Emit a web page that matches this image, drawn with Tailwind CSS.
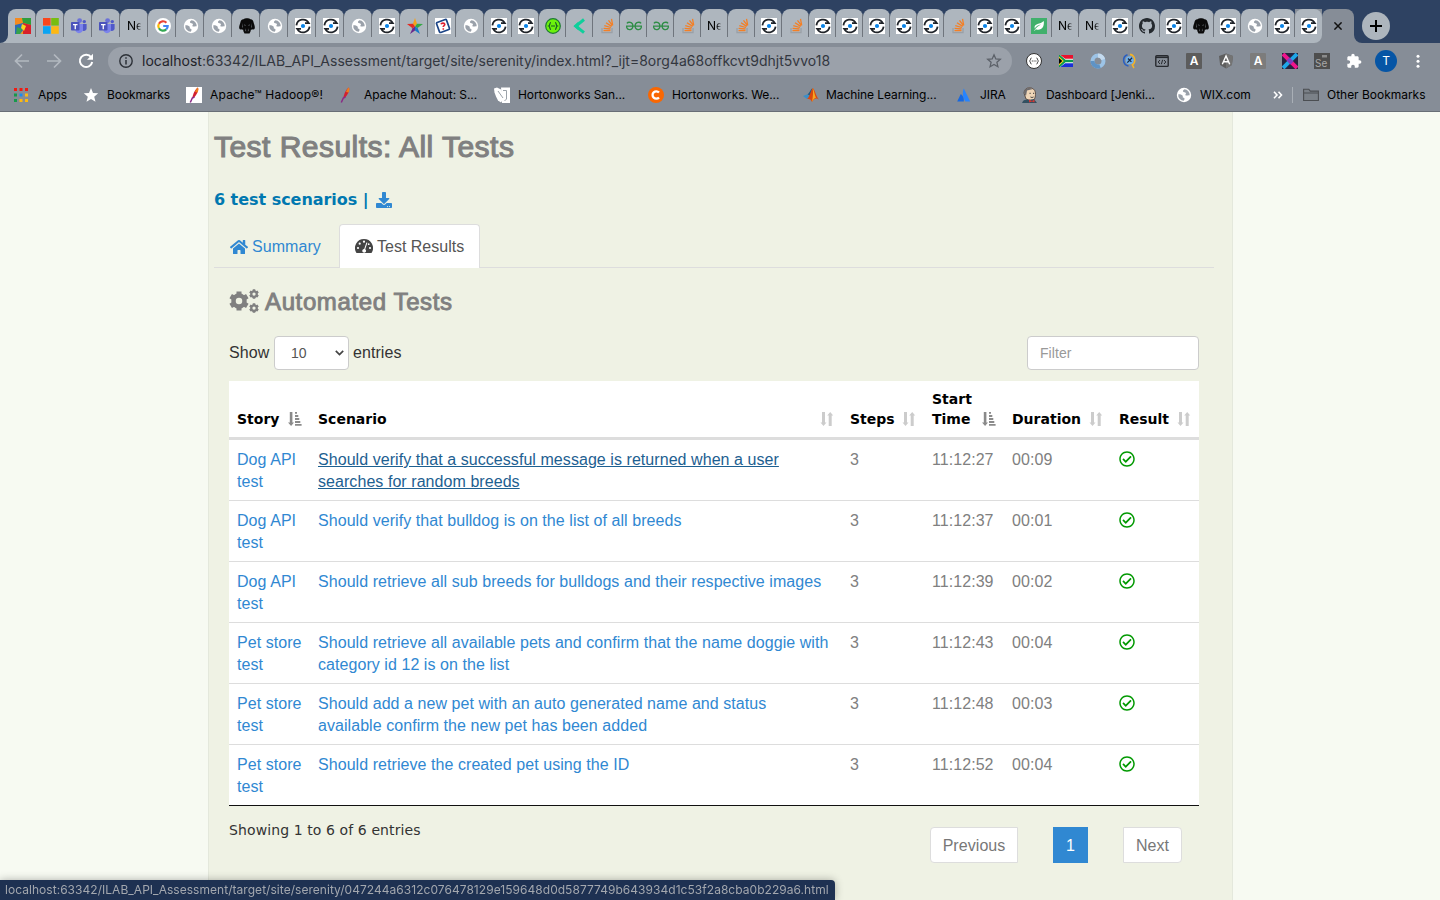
<!DOCTYPE html>
<html lang="en">
<head>
<meta charset="utf-8">
<title>Test Results: All Tests</title>
<script src="https://cdn.jsdelivr.net/npm/@tailwindcss/browser@4"></script>
</head>
<body class="h-[900px] w-[1440px] overflow-hidden bg-[#f7faf2] font-['Liberation_Sans',sans-serif] text-base leading-[22px] text-[#333]">

<!-- icon sprite -->
<svg class="hidden">
  <symbol id="avg" viewBox="0 0 16 16"><rect width="16" height="16" fill="#e8a020"/><path d="M0 0h7l1 5-8 2z" fill="#f58a1f"/><path d="M7 0h9v7l-8-2z" fill="#2f9e3d"/><path d="M8 5l8 2v9H8z" fill="#d8202a"/><path d="M0 7l8-2 1 6-4 5H0z" fill="#2b6cb8"/><path d="M2 9l5 2-2 5H1z" fill="#37a24a"/><path d="M7 6l4 2-2 5-3-3z" fill="#f7d51d"/></symbol>
  <symbol id="ms" viewBox="0 0 16 16"><path d="M0 0h7.600v7.600H0z" fill="#f9461c"/><path d="M8.200 0h7.600v7.600H8.200z" fill="#77bd10"/><path d="M0 8.200h7.600v7.600H0z" fill="#0ba4f3"/><path d="M8.200 8.200h7.600v7.600H8.200z" fill="#fdb813"/></symbol>
  <symbol id="teams" viewBox="0 0 16 16"><circle cx="8.600" cy="2.600" r="2.400" fill="#6a70d8"/><circle cx="13.300" cy="3.600" r="1.700" fill="#5059c9"/><path d="M11 6h4.600v4.500a2.600 2.600 0 0 1-4.600 1.500z" fill="#5059c9"/><path d="M4.500 6h7.500v5.500a4 4 0 0 1-7.500 1.500z" fill="#7b83eb"/><rect y="4" width="8.500" height="8.500" rx=".8" fill="#4b53bc"/><path d="M2 6h4.500v1.300H4.900v4H3.600v-4H2z" fill="#fff"/></symbol>
  <symbol id="google" viewBox="0 0 16 16"><circle cx="8" cy="8" r="8" fill="#fff"/><g fill="none" stroke-width="2.200"><path d="M11.400 4.700A4.700 4.700 0 0 0 3.900 5.700" stroke="#ea4335"/><path d="M3.900 5.700a4.700 4.700 0 0 0 0 4.600" stroke="#fbbc05"/><path d="M3.900 10.300a4.700 4.700 0 0 0 7.300 1.100" stroke="#34a853"/><path d="M11.200 11.400A4.600 4.600 0 0 0 12.700 8H8.200" stroke="#4285f4"/></g></symbol>
  <symbol id="globe" viewBox="0 0 16 16"><circle cx="8" cy="8" r="7.200" fill="#fff"/><path d="M8.500 2.200c-1 .9-1.800 1.300-1.500 2.300.5 1 2.400.3 2.900 1.500.3 1.200-1 1.500-.4 2.200 1 .9 2.700-.4 4.200.1a5.800 5.800 0 0 0-5.200-6.100zM2.300 7.200c1.700-.1 3.200.3 4.200 1.300.8.9-.2 1.500.5 2.100.8.500 1.800.5 1.500 1.700-.2.700-.6.900-.7 1.500A5.800 5.800 0 0 1 2.300 7.200z" fill="#9aa1aa"/></symbol>
  <symbol id="dog" viewBox="0 0 16 16"><path d="M4.500 1.300C6 0 10 0 11.500 1.300c2 0 2.800 1.500 3.300 4 .6 1.800 1.200 3 1 5-.5 1.200-1.300 1.400-2.100 1-.6.700-1.200.6-1.700-.1l-.5 2.300-1 2H5.500l-1-2L4 11.200c-.5.700-1.100.8-1.700.1-.8.400-1.600.2-2.100-1-.2-2 .4-3.200 1-5 .5-2.500 1.300-4 3.300-4z" fill="#0a0a0a"/><path d="M5 6.500l1.500.5-.4.900zM11 6.500L9.500 7l.4.900zM6.400 12.500l.6-2.200.1 3.400zM9.600 12.500L9 10.300l-.1 3.400zM3.600 5l.2 5-.6-1zM12.400 5l-.2 5 .6-1z" fill="#8f969d"/></symbol>
  <symbol id="ring" viewBox="0 0 16 16"><rect width="16" height="16" fill="#fff"/><g fill="none" stroke="#20242a" stroke-width="1.800"><path d="M1.400 7.300A6.600 6.600 0 0 1 13.800 5.200H10"/><path d="M14.600 8.700A6.600 6.600 0 0 1 2.200 10.800H6"/></g><path d="M13.300 4.300l2.200 1.800h-3zM2.700 11.700L.5 9.900h3z" fill="#20242a"/><circle cx="8" cy="8" r="2.100" fill="#0a84e8"/></symbol>
  <symbol id="star" viewBox="0 0 16 16"><path d="M8 0l2 5.800L8 8.500 5.800 6z" fill="#f5a11c"/><path d="M16 6l-5.500 4L8 8.500l2-2.700z" fill="#35a845"/><path d="M13 16l-5-3.500v-4l2.600 1.400z" fill="#1779c8"/><path d="M3 16l2.600-5.800L8 8.500v4z" fill="#6b2a8c"/><path d="M0 6l5.900-.2L8 8.500l-2.400 1.700z" fill="#e12b23"/></symbol>
  <symbol id="stamp" viewBox="0 0 16 16"><rect width="16" height="16" fill="#fff"/><rect x="2.700" y="2.700" width="10.600" height="10.600" rx="1" fill="#fff" stroke="#1c4587" stroke-width="1.700" transform="rotate(-20 8 8)"/><path d="M6 6.200c.5-1.500 3.600-1.500 3.800.2.100 1.200-1.600 1.300-1.600 2.600M8.300 10.200v1.600" stroke="#e02030" stroke-width="1.600" fill="none"/></symbol>
  <symbol id="swagger" viewBox="0 0 16 16"><circle cx="8" cy="8" r="7.300" fill="#6bf20c" stroke="#1d7a33" stroke-width="1.200"/><path d="M6 4.500c-1.800 0-.6 2.900-2.200 3.500 1.600.6.400 3.500 2.200 3.500M10 4.500c1.800 0 .6 2.900 2.200 3.500-1.600.6-.4 3.500-2.200 3.500M6 8h4" fill="none" stroke="#17552a" stroke-width="1.200"/></symbol>
  <symbol id="kat" viewBox="0 0 16 16"><path d="M12 1.500L4 8.200l8 6.500" fill="none" stroke="#0fcf9b" stroke-width="3"/><path d="M1.500 8l5-4.500v9z" fill="#0fcf9b"/></symbol>
  <symbol id="so" viewBox="0 0 16 16"><path d="M3 10v4.600h10V10" fill="none" stroke="#9aa0a6" stroke-width="1.300"/><path d="M4.500 12.700h7M4.600 10.300l6.900.7M5.300 7.600l6.600 1.900M7 4.800l5.700 3.600M9.500 2.300l4 5.400M12.500.8l1.200 6.500" stroke="#f47f24" stroke-width="1.300"/></symbol>
  <symbol id="gfg" viewBox="0 0 16 16"><g fill="none" stroke="#2f8d46" stroke-width="1.300"><path d="M.9 5.300C2.200 3.600 6.900 3.800 6.900 8S2 12.700.8 9.800L.6 8.100H15.400L15.200 9.800C14 12.700 9.100 12.200 9.100 8S13.800 3.600 15.100 5.300"/></g></symbol>
  <symbol id="leaf" viewBox="0 0 16 16"><rect width="16" height="16" fill="#41b06c"/><path d="M12.800 3c.5 5-1.300 9-6.300 8.700-.9 0-1.500-.3-1.700-.4l-1 1.500-.6-.4C5 9.500 8 8 10 6.300 7.500 7 5 8.500 3.700 10.500 2.500 5 9.500 6.500 12.800 3z" fill="#fff"/></symbol>
  <symbol id="gh" viewBox="0 0 16 16"><path fill="#24292e" d="M8 0C3.580 0 0 3.580 0 8c0 3.540 2.290 6.530 5.470 7.590.4.070.55-.17.55-.38 0-.19-.01-.82-.01-1.490-2.010.37-2.530-.49-2.690-.94-.09-.23-.48-.94-.82-1.130-.28-.15-.68-.52-.01-.53.63-.01 1.080.58 1.230.82.720 1.210 1.870.87 2.330.66.070-.52.280-.87.510-1.070-1.780-.2-3.640-.89-3.640-3.950 0-.87.310-1.590.820-2.150-.08-.2-.36-1.020.080-2.120 0 0 .67-.21 2.200.82.640-.18 1.320-.27 2-.27s1.360.09 2 .27c1.530-1.040 2.200-.82 2.200-.82.440 1.100.160 1.920.080 2.120.510.560.820 1.270.820 2.150 0 3.070-1.870 3.750-3.650 3.950.290.250.540.730.540 1.480 0 1.070-.01 1.930-.01 2.200 0 .21.150.460.550.38A8.010 8.010 0 0 0 16 8c0-4.420-3.580-8-8-8z"/></symbol>
  <symbol id="feather" viewBox="0 0 16 16"><path d="M11.800.5c1.200 1.600-.2 6-3.300 9.500L6.300 11c.6-4 3-9 5.500-10.500z" fill="#d3202f"/><path d="M11.800.5c1 .9.600 3.300-.3 5L9 5c.8-2 1.700-3.700 2.800-4.500z" fill="#ef7d1a"/><path d="M8.500 10L6.300 11l-2 4.500" stroke="#8a2a86" stroke-width="1.500" fill="none"/></symbol>
  <symbol id="sortboth" viewBox="0 0 14 14"><path d="M2 0h3v10.500h1.500L3.500 14l-3-3.500H2zM8.700 14h3V3.500h1.500L10.200 0l-3 3.500h1.500z" fill="#ccc"/></symbol>
  <symbol id="sortasc" viewBox="0 0 14 14"><path d="M1.800 0h2.600v10.500h1.600L3.100 14 0 10.500h1.800zM7 0h2v1.700H7zM7 3h3.300v2H7zM7 6h4.300v2H7zM7 9h5.300v2H7zM7 12h6.600v1.800H7z" fill="#8a8a8a"/></symbol>
  <symbol id="ok" viewBox="0 0 512 512"><path fill="#090" d="M256 8C119.033 8 8 119.033 8 256s111.033 248 248 248 248-111.033 248-248S392.967 8 256 8zm0 48c110.532 0 200 89.451 200 200 0 110.532-89.451 200-200 200-110.532 0-200-89.451-200-200 0-110.532 89.451-200 200-200m140.204 130.267l-22.536-22.718c-4.667-4.705-12.265-4.736-16.970-.068L215.346 303.697l-59.792-60.277c-4.667-4.705-12.265-4.736-16.970-.069l-22.719 22.536c-4.705 4.667-4.736 12.265-.068 16.971l90.781 91.516c4.667 4.705 12.265 4.736 16.970.068l172.589-171.204c4.704-4.668 4.734-12.266.067-16.971z"/></symbol>
  <symbol id="gear" viewBox="-10 -10 20 20"><g stroke="#808080" fill="none"><circle r="5.500" stroke-width="4.500"/><path stroke-width="5" d="M0-9.600V-6M0 9.600V6M8.300-4.800L5.200-3M8.300 4.800L5.200 3M-8.300-4.800L-5.200-3M-8.300 4.800L-5.200 3"/></g></symbol>
</svg>

<!-- tab strip -->
<header class="font-['Inter','Liberation_Sans',sans-serif] text-black">
  <div class="flex h-[43px] items-end bg-[#2e4262]">
    <div class="flex h-2 w-2 self-end bg-[#aeb6be]"><div class="size-2 rounded-br-lg bg-[#2e4262]"></div></div>
    <div id="tabs" class="flex h-[34px]"></div>
    <div class="flex h-[34px] w-8 items-center justify-center rounded-t-lg bg-[#868d97]">
      <svg class="size-2" viewBox="0 0 8 8"><path d="M.4.4l7.200 7.200M7.600.4L.4 7.600" stroke="#111" stroke-width="1.500"/></svg>
    </div>
    <div class="size-2 self-end bg-[#868d97]"><div class="size-2 rounded-bl-lg bg-[#2e4262]"></div></div>
    <div class="mb-[3px] flex size-7 items-center justify-center rounded-full bg-[#adb5bd]">
      <svg class="size-3" viewBox="0 0 12 12"><path d="M6 0v12M0 6h12" stroke="#000" stroke-width="2"/></svg>
    </div>
  </div>

  <!-- toolbar -->
  <div class="flex h-[36px] items-center bg-[#868d97]">
    <svg class="ml-[14px] size-4" viewBox="0 0 16 16"><path d="M15 8H2M8 1.500L1.500 8 8 14.500" fill="none" stroke="#b3b9c0" stroke-width="1.700"/></svg>
    <svg class="ml-4 size-4" viewBox="0 0 16 16"><path d="M1 8h13M8 1.500L14.500 8 8 14.500" fill="none" stroke="#b3b9c0" stroke-width="1.700"/></svg>
    <svg class="ml-4 size-4" viewBox="0 0 16 16"><path d="M13.200 4.300A6.200 6.200 0 1 0 14.200 9" fill="none" stroke="#fff" stroke-width="2"/><path d="M15 .8v6H9z" fill="#fff"/></svg>
    <div class="ml-[14px] flex h-7 w-[904px] items-center rounded-full bg-[#9ba1aa] pl-[11px]">
      <svg class="size-[14px]" viewBox="0 0 14 14"><circle cx="7" cy="7" r="6.200" fill="none" stroke="#2d3138" stroke-width="1.400"/><path d="M7 6v4.500M7 3.300v1.500" stroke="#2d3138" stroke-width="1.500"/></svg>
      <span class="ml-[9px] w-[844px] whitespace-nowrap text-sm tracking-[0.01px] text-[#33373f]"><span class="text-[#1f2329]">localhost</span>:63342/ILAB_API_Assessment/target/site/serenity/index.html?_ijt=8org4a68offkcvt9dhjt5vvo18</span>
      <svg class="size-4 shrink-0" viewBox="0 0 16 16"><path d="M8 1.800l1.800 4.100 4.500.4-3.400 3 1 4.400L8 11.400l-3.900 2.300 1-4.400-3.400-3 4.500-.4z" fill="none" stroke="#5c6169" stroke-width="1.300"/></svg>
    </div>
    <div class="ml-[6px] grid grid-cols-[repeat(13,32px)] place-items-center">
      <svg class="size-4" viewBox="0 0 16 16"><circle cx="8" cy="8" r="7.500" fill="#fff" stroke="#333" /><path d="M5.500 5c-1.500 0-.5 2.500-2 3 1.500.5.500 3 2 3M10.500 5c1.500 0 .5 2.500 2 3-1.500.5-.5 3-2 3" fill="none" stroke="#333"/><path d="M5.800 8h4.600" stroke="#333" stroke-dasharray="1 .8"/></svg>
      <svg class="h-3 w-[14px]" viewBox="0 0 14 12"><path d="M0 0h14v6H0z" fill="#e8112d"/><path d="M0 6h14v6H0z" fill="#1a2fd8"/><path d="M0 0l6 4.500h8M14 7.500H6L0 12" stroke="#fff" stroke-width="1.500" fill="none"/><path d="M0 0h1l5.500 4.800H14v2.400H6.500L1 12H0z" fill="#0a9a50"/><path d="M0 1.500L4.800 6 0 10.500z" fill="#ffd21a"/><path d="M0 3l3.300 3L0 9z" fill="#000"/></svg>
      <svg class="size-4" viewBox="0 0 16 16"><g fill="none" stroke-width="4"><circle cx="8" cy="8" r="5.500" stroke="#9cc3e6"/><path d="M2.500 8A5.500 5.500 0 0 0 10 13.100" stroke="#5f93c5"/><path d="M8 2.500A5.500 5.500 0 0 1 13.200 6.500" stroke="#c4daee"/></g></svg>
      <svg class="size-4" viewBox="0 0 16 16"><g fill="none" stroke-width="1.600"><path d="M5.500 1.800a5.800 5.800 0 0 0 1 11.200" stroke="#2a5fc0"/><path d="M8 1.400a5.800 5.800 0 0 1 2.300 10.400L12 15" stroke="#f2b32a"/></g><circle cx="7.700" cy="7.200" r="4" fill="#6fb2ee"/><path d="M5.300 9.600l4.800-4.800M6 5.500l3.400 3.400" stroke="#1c2b44" stroke-width="1.300"/></svg>
      <svg class="size-[14px]" viewBox="0 0 14 14"><rect x=".8" y="1.800" width="12.400" height="10.600" rx="1" fill="none" stroke="#26292e" stroke-width="1.400"/><path d="M1 3.400h12" stroke="#26292e" stroke-width="1.400"/><path d="M5 6L3.200 8 5 10M9 6l1.800 2L9 10M7.600 5.800L6.400 10.200" fill="none" stroke="#26292e"/></svg>
      <div class="flex size-4 items-center justify-center rounded-[1px] bg-[#5c5c5c] text-[12px] leading-4 font-semibold text-white">A</div>
      <svg class="size-4" viewBox="0 0 16 16"><path d="M8 .5l7 2.400-1.100 9L8 15.500l-5.900-3.600-1.100-9z" fill="#5f5f5f"/><path d="M8 .5l7 2.400-1.100 9L8 15.500z" fill="#747474"/><path d="M4.300 11.200L8 3l3.700 8.200M5.800 8.800h4.400" fill="none" stroke="#fff" stroke-width="1.400"/></svg>
      <div class="flex size-4 items-center justify-center rounded-[1px] bg-[#7c7c7c] text-[12px] leading-4 font-semibold text-white">A</div>
      <svg class="size-4" viewBox="0 0 16 16"><path d="M0 0h16v16H0z" fill="#26223f"/><path d="M15 1L1 15" stroke="#1fa6e8" stroke-width="4"/><path d="M1 1l14 14" stroke="#f0148c" stroke-width="4"/><path d="M6 6l4 4" stroke="#7a3fc0" stroke-width="4"/></svg>
      <svg class="size-4" viewBox="0 0 16 16"><path d="M0 0h16v16H0z" fill="#4e4e4e"/><path d="M8 2h5v2.500H8z" fill="#8b8b8b"/><text x="1" y="14" font-family="Inter" font-size="10" fill="#a8a8a8">Se</text></svg>
      <svg class="size-4" viewBox="0 0 24 24"><path fill="#fff" d="M20.500 11H19V7c0-1.100-.9-2-2-2h-4V3.500C13 2.120 11.880 1 10.500 1S8 2.120 8 3.500V5H4c-1.100 0-1.990.9-1.990 2v3.800H3.500c1.490 0 2.700 1.210 2.700 2.700s-1.210 2.700-2.700 2.700H2V20c0 1.100.9 2 2 2h3.800v-1.500c0-1.490 1.210-2.700 2.700-2.700 1.490 0 2.700 1.210 2.700 2.700V22H17c1.100 0 2-.9 2-2v-4h1.500c1.380 0 2.500-1.120 2.500-2.500S21.880 11 20.500 11z"/></svg>
      <div class="flex size-[22px] items-center justify-center rounded-full bg-[#0655a5] text-xs text-white">T</div>
      <svg class="h-4 w-1" viewBox="0 0 4 16"><g fill="#fff"><circle cx="2" cy="3.200" r="1.500"/><circle cx="2" cy="8.200" r="1.500"/><circle cx="2" cy="13.200" r="1.500"/></g></svg>
    </div>
  </div>

  <!-- bookmarks bar -->
  <div class="flex h-[33px] items-center border-b border-[#686e76] bg-[#868d97] pl-[14px] text-xs leading-4 tracking-[-0.08px] whitespace-nowrap">
    <svg class="size-[14px]" viewBox="0 0 14 14"><path d="M0 0h3v3H0zM5.500 0h3v3h-3zM11 0h3v3h-3z" fill="#f01b12"/><path d="M0 5.500h3v3H0zM0 11h3v3H0z" fill="#17994b"/><path d="M5.500 5.500h3v3h-3z" fill="#1a8cf0"/><path d="M11 5.500h3v3h-3zM5.500 11h3v3h-3zM11 11h3v3h-3z" fill="#fdb912"/></svg>
    <span class="ml-[10px] w-[45px]">Apps</span>
    <svg class="size-4" viewBox="0 0 16 16"><path d="M8 1l2 4.900 5.200.4-4 3.400 1.300 5.100L8 12l-4.500 2.800 1.300-5.100-4-3.400L6 5.900z" fill="#fff"/></svg>
    <span class="ml-2 w-[79px]">Bookmarks</span>
    <svg class="size-4 bg-white"><use href="#feather"/></svg>
    <span class="ml-2 w-[131px] tracking-[0.2px]">Apache™ Hadoop®!</span>
    <svg class="-ml-1 size-4"><use href="#feather"/></svg>
    <span class="ml-[11px] w-[130px]">Apache Mahout: S...</span>
    <svg class="size-4" viewBox="0 0 16 16"><path d="M7 .5h9V16H8z" fill="#fff"/><path d="M0 1.500l3-1 4 2 2 5 0 5-2 3-3-2-2-4-1.500-4z" fill="#fff"/><path d="M9 3.500h3.500V12l-2 2M4 4l5 7" stroke="#9ba2a9" fill="none"/></svg>
    <span class="ml-2 w-[130px]">Hortonworks San...</span>
    <svg class="size-4" viewBox="0 0 16 16"><circle cx="8" cy="8" r="8" fill="#f96702"/><path d="M11 5.500a3.700 3.700 0 1 0 0 5" fill="none" stroke="#fff" stroke-width="2.300"/></svg>
    <span class="ml-2 w-[131px]">Hortonworks. We...</span>
    <svg class="size-4" viewBox="0 0 16 16"><path d="M0 9l4.500-1.800L7 9.500 4 12z" fill="#3b8fc9"/><path d="M4.500 7.200C6.500 6.500 8 1.500 9.500 1.200L7.500 9z" fill="#1f5c86"/><path d="M9.500 1.200c2 0 3.500 8.300 6.500 11.300-3-2-5-1-7 2.500-1-2.500-2-3.500-5-3 2.500-1.500 4-9 5.500-10.800z" fill="#d9480f"/><path d="M9.500 1.200c1 3 .5 8-.5 13.800 1.500-3 3-4 4-4.200-1.500-3-2-8.500-3.500-9.600z" fill="#f6a623"/></svg>
    <span class="ml-[7px] w-[130px]">Machine Learning...</span>
    <svg class="size-4" viewBox="0 0 16 16"><path d="M7.800 1.500l6.400 13H9.400C7 11 5.800 6 7.800 1.500z" fill="#2684ff"/><path d="M4.800 7c2 1.500 3.400 4 3 7.500H1.200z" fill="#1668e0"/></svg>
    <span class="ml-2 w-[42px]">JIRA</span>
    <svg class="size-4" viewBox="0 0 16 16"><path d="M2 6c0-7 11-7 11.500 0 0 4-.5 7-4 8L4 12z" fill="#f0d6b7" stroke="#4a3b33" stroke-width=".8"/><path d="M2 6C2 .5 8 0 11 2L5 3.500 4 9z" fill="#6d6b6d"/><path d="M0 16c1-3 3-4 6-3l6-1 3 4z" fill="#335061"/><path d="M7 12.500l3 1.500 2.500-1.500v3L10 14.500l-3 1z" fill="#d33833"/><path d="M7.500 6.300h1.200M11 6.300h1.200M8.500 10c1 .6 2 .6 3 0" stroke="#333" fill="none"/></svg>
    <span class="ml-2 w-[130px]">Dashboard [Jenki...</span>
    <svg class="size-4"><use href="#globe"/></svg>
    <span class="ml-2 w-[73px]">WIX.com</span>
    <svg class="h-2 w-[10px]" viewBox="0 0 10 8"><path d="M1 .8L4 4 1 7.200M5.500.8L8.500 4l-3 3.200" fill="none" stroke="#fff" stroke-width="1.600"/></svg>
    <span class="ml-[9px] h-4 w-px bg-[#a9afb6]"></span>
    <svg class="ml-[10px] h-[14px] w-4" viewBox="0 0 16 14"><path d="M.6 12.500V1.200h5.200l1.500 1.900h8.100v9.400zM.6 5h14.800" fill="#7b8188" stroke="#4b4e52" stroke-width="1.100"/></svg>
    <span class="ml-2 tracking-[-0.02px]">Other Bookmarks</span>
  </div>
</header>

<!-- report page -->
<main class="ml-[208px] h-[788px] w-[1025px] border-x border-[#e4e8dc] bg-[#eff2e4] px-[5px] tracking-[0.06px]">
  <h1 class="pt-[17px] text-[30px] leading-[36px] tracking-[0.47px] text-[#808080] [-webkit-text-stroke:1.1px_#808080]">Test Results: All Tests</h1>
  <div class="mt-[23px] flex h-6 items-center font-['DejaVu_Sans',sans-serif] text-base font-bold tracking-[-0.04px] text-[#0078b0]">
    <span class="w-[162px] whitespace-nowrap">6 test scenarios |</span>
    <svg class="size-4" viewBox="0 0 512 512"><path fill="#3088d2" d="M216 0h80c13.300 0 24 10.700 24 24v168h87.700c17.800 0 26.700 21.500 14.100 34.100L269.700 378.300c-7.500 7.500-19.800 7.500-27.300 0L90.100 226.100c-12.600-12.600-3.700-34.100 14.100-34.100H192V24c0-13.300 10.700-24 24-24zm296 376v112c0 13.300-10.700 24-24 24H24c-13.300 0-24-10.700-24-24V376c0-13.300 10.700-24 24-24h146.700l49 49c20.100 20.100 52.500 20.100 72.600 0l49-49H488c13.300 0 24 10.700 24 24zm-124 88c0-11-9-20-20-20s-20 9-20 20 9 20 20 20 20-9 20-20zm64 0c0-11-9-20-20-20s-20 9-20 20 9 20 20 20 20-9 20-20z"/></svg>
  </div>

  <nav class="mt-3 flex h-11 w-[1000px] shadow-[inset_0_-1px_0_#ddd]">
    <a class="flex w-[125px] items-center pt-px pl-4 text-[#3088d2]">
      <svg class="mr-1 h-4 w-[18px]" viewBox="0 0 576 512"><path fill="#3088d2" d="M280.370 148.260L96 300.110V464a16 16 0 0 0 16 16l112.060-.29a16 16 0 0 0 15.920-16V368a16 16 0 0 1 16-16h64a16 16 0 0 1 16 16v95.640a16 16 0 0 0 16 16.050L464 480a16 16 0 0 0 16-16V300L295.670 148.260a12.190 12.190 0 0 0-15.300 0zM571.600 251.470L488 182.560V44.050a12 12 0 0 0-12-12h-56a12 12 0 0 0-12 12v72.610L318.470 43a48 48 0 0 0-61 0L4.340 251.470a12 12 0 0 0-1.600 16.900l25.500 31A12 12 0 0 0 45.150 301l235.220-193.740a12.190 12.190 0 0 1 15.300 0L530.900 301a12 12 0 0 0 16.900-1.600l25.500-31a12 12 0 0 0-1.700-16.930z"/></svg>Summary</a>
    <a class="flex w-[141px] items-center rounded-t border border-b-0 border-[#ddd] bg-white pl-[15px] tracking-normal text-[#555]">
      <svg class="mr-1 h-4 w-[18px]" viewBox="0 0 18 16"><path d="M9 0a9 9 0 0 1 7.800 13.500q-.3.500-.8.500H2q-.5 0-.8-.5A9 9 0 0 1 9 0z" fill="#444"/><g fill="#fff"><circle cx="3" cy="9" r="1.100"/><circle cx="4.700" cy="4.700" r="1.100"/><circle cx="9" cy="2.700" r="1.100"/><circle cx="15" cy="9" r="1.100"/><circle cx="13.700" cy="5.200" r=".9"/><path d="M11.400 3.500l1 .3-2.200 6.400a1.900 1.900 0 1 1-1-.3z"/></g></svg>Test Results</a>
  </nav>

  <section class="w-[985px] pl-[15px]">
    <h2 class="mt-5 flex h-[26px] items-center text-2xl leading-[26px] tracking-[0.62px] text-[#808080] [-webkit-text-stroke:0.9px_#808080]">
      <span class="mr-[6px] flex h-6 w-[30px]"><svg class="size-5 self-center"><use href="#gear"/></svg><span class="flex flex-col justify-between"><svg class="size-[10px]" viewBox="-10 -10 20 20"><use href="#gear" x="-10" y="-10" width="20" height="20"/></svg><svg class="size-[10px]" viewBox="-10 -10 20 20"><use href="#gear" x="-10" y="-10" width="20" height="20"/></svg></span></span>
      <span class="pt-px">Automated Tests</span></h2>

    <div class="mt-[22px] flex h-[34px] items-center">
      <span class="w-[45px]">Show</span>
      <div class="flex h-[34px] w-[75px] items-center rounded border border-[#ccc] bg-white pr-[4px] pl-4 text-sm text-[#555]">10
        <svg class="ml-auto h-[6px] w-[9px]" viewBox="0 0 9 6"><path d="M.8.800l3.700 3.700L8.200.800" fill="none" stroke="#444" stroke-width="1.700"/></svg></div>
      <span class="ml-[4px]">entries</span>
      <div class="ml-auto flex h-[34px] w-[172px] items-center rounded border border-[#ccc] bg-white pl-3 text-sm text-[#999]">Filter</div>
    </div>

    <table class="mt-[11px] w-[970px] table-fixed border-separate border-spacing-0 bg-white">
      <colgroup><col class="w-[81px]"><col class="w-[532px]"><col class="w-[82px]"><col class="w-[80px]"><col class="w-[107px]"><col class="w-[88px]"></colgroup>
      <thead class="font-['DejaVu_Sans',sans-serif] text-sm leading-5 tracking-normal text-black">
        <tr class="h-[59px] text-left align-bottom [&>th]:border-b-[3px] [&>th]:border-[#ddd] [&>th]:px-2 [&>th]:py-2">
          <th><div class="flex items-end justify-between">Story<svg class="mb-[3px] size-[14px]"><use href="#sortasc"/></svg></div></th>
          <th><div class="flex items-end justify-between">Scenario<svg class="mb-[3px] size-[14px]"><use href="#sortboth"/></svg></div></th>
          <th><div class="flex items-end justify-between">Steps<svg class="mb-[3px] size-[14px]"><use href="#sortboth"/></svg></div></th>
          <th><div class="flex items-end justify-between">Start<br>Time<svg class="mb-[3px] size-[14px]"><use href="#sortasc"/></svg></div></th>
          <th><div class="flex items-end justify-between">Duration<svg class="mb-[3px] size-[14px]"><use href="#sortboth"/></svg></div></th>
          <th><div class="flex items-end justify-between">Result<svg class="mb-[3px] size-[14px]"><use href="#sortboth"/></svg></div></th>
        </tr>
      </thead>
      <tbody id="rows"></tbody>
    </table>

    <div class="flex items-start">
      <p class="mt-[14px] font-['DejaVu_Sans',sans-serif] text-sm leading-5 tracking-[0.1px]">Showing 1 to 6 of 6 entries</p>
      <div class="mt-[21px] mr-[17px] ml-auto flex h-9 gap-[35px] text-[#777]">
        <a class="flex w-[88px] items-center justify-center rounded-l border border-[#ddd] bg-white pt-px">Previous</a>
        <a class="flex w-[35px] items-center justify-center bg-[#3088d2] pt-px text-white">1</a>
        <a class="flex w-[59px] items-center justify-center rounded-r border border-[#ddd] bg-white pt-px">Next</a>
      </div>
    </div>
  </section>
</main>

<!-- link status bubble -->
<div class="fixed bottom-0 left-0 flex h-5 w-[835px] items-center rounded-tr bg-[#1e3152] pl-[5px] font-['Inter',sans-serif] text-xs tracking-[0.04px] whitespace-nowrap text-[#a3a7ae] shadow-[0_0_8px_rgba(0,0,0,0.3)]">localhost:63342/ILAB_API_Assessment/target/site/serenity/047244a6312c076478129e159648d0d5877749b643934d1c53f2a8cba0b229a6.html</div>

<script>
const tabs = 'avg ms teams teams N google globe globe dog globe ring ring globe ring star stamp globe ring ring swagger kat so gfg gfg so N so ring so ring ring ring ring ring so ring ring leaf N N ring gh ring dog ring globe ring ring'.split(' ');
document.getElementById('tabs').innerHTML = tabs.map((t, i) => {
  const size = i < 18 ? 'w-7 pl-[7px]' : 'w-[27px] pl-[6px]';
  const last = i === tabs.length - 1;
  const icon = t === 'N'
    ? '<span class="bg-linear-to-r from-black from-55% to-[#aeb6be] to-90% bg-clip-text text-xs text-transparent">Ne</span>'
    : `<svg class="size-4"><use href="#${t}"/></svg>`;
  const line = last ? '' : '<span class="mb-[2px] ml-auto h-[23px] w-px bg-[#6f757d]"></span>';
  return `<div class="h-full ${last ? 'bg-[#868d97]' : 'bg-[#2e4262]'}"><div class="flex h-full items-center rounded-t-lg bg-[#aeb6be] ${size} ${last ? 'rounded-br-lg' : ''}">${icon}${line}</div></div>`;
}).join('');

const rows = [
  ['Dog API test', 'Should verify that a successful message is returned when a user<br>searches for random breeds', '11:12:27', '00:09'],
  ['Dog API test', 'Should verify that bulldog is on the list of all breeds', '11:12:37', '00:01'],
  ['Dog API test', 'Should retrieve all sub breeds for bulldogs and their respective images', '11:12:39', '00:02'],
  ['Pet store test', 'Should retrieve all available pets and confirm that the name doggie with<br>category id 12 is on the list', '11:12:43', '00:04'],
  ['Pet store test', 'Should add a new pet with an auto generated name and status<br>available confirm the new pet has been added', '11:12:48', '00:03'],
  ['Pet store test', 'Should retrieve the created pet using the ID', '11:12:52', '00:04'],
];
document.getElementById('rows').innerHTML = rows.map((r, i) => {
  const link = i === 0 ? 'text-[#1d6091] underline' : '';
  const edge = i === 5 ? '[&>td]:border-[#111]' : '[&>td]:border-[#ddd]';
  return `<tr class="h-[61px] align-top text-[#808080] ${edge} [&>td]:border-b [&>td]:pt-[9px] [&>td]:pl-2">
    <td class="text-[#3088d2]">${r[0].replace(' test', '<br>test')}</td>
    <td class="whitespace-nowrap text-[#3088d2]"><span class="${link}">${r[1]}</span></td>
    <td>3</td><td>${r[2]}</td><td>${r[3]}</td>
    <td><svg class="mt-[2px] size-4"><use href="#ok"/></svg></td></tr>`;
}).join('');
</script>
</body>
</html>
